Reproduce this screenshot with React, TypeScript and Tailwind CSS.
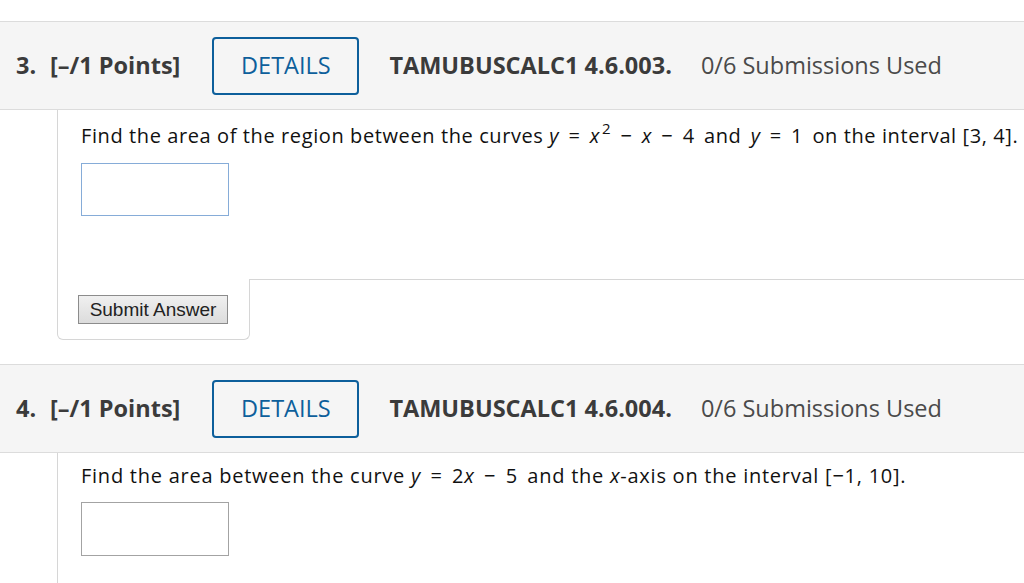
import React from 'react';

const headFont = { fontFamily: '"Open Sans", "Liberation Sans", sans-serif' };

function Header({ num, code }: { num: string; code: string }) {
  return (
    <div
      className="flex items-center h-[89px] border-y border-[#dcdcdc] bg-[#f5f5f5] pl-4 text-[23.5px] text-[#3b3b3b]"
      style={headFont}
    >
      <span className="font-bold w-[34px]">{num}.</span>
      <span className="font-bold">[–/1 Points]</span>
      <button className="ml-[32px] h-[58px] w-[147px] border-2 border-[#0d5f9b] rounded-[4px] text-[#0d5f9b] flex items-center justify-center">
        DETAILS
      </button>
      <span className="font-bold ml-[30px]">TAMUBUSCALC1 {code}.</span>
      <span className="ml-[29px] text-[#4a4a4a]">0/6 Submissions Used</span>
    </div>
  );
}

function I({ children }: { children: React.ReactNode }) {
  return <i>{children}</i>;
}

// math runs get wider spaces, like the Verdana page
function M({ children }: { children: React.ReactNode }) {
  return <span className="[word-spacing:3.5px]">{children}</span>;
}

export default function App() {
  return (
    <div className="w-[1024px] h-[583px] overflow-hidden bg-white pt-[21px]">
      {/* Question 3 */}
      <Header num="3" code="4.6.003" />
      <div className="ml-[57px]">
        <div className="border-l border-[#d6d6d6] h-[169px] pl-[23px] pt-[14px] text-[20px] tracking-[0.6px] text-[#111] font-['Open_Sans',sans-serif]">
          <p className="leading-[24px] whitespace-nowrap">
            Find the area of the region between the curves{' '}
            <M>
              <I>y</I> = <I>x</I>
              <sup className="text-[15px] -top-[9px] ml-[2px]">2</sup> − <I>x</I> − 4 and <I>y</I> = 1 on
            </M>{' '}
            the interval [3, 4].
          </p>
          <input
            className="mt-[15px] block w-[148px] h-[53px] border border-[#86acd8] outline-none"
            type="text"
          />
        </div>
        <div className="flex">
          <div className="w-[193px] h-[61px] border-l border-b border-r border-[#d6d6d6] rounded-b-[6px] pl-[20px] pt-[16px]">
            <button className="w-[150px] h-[29px] border border-[#8c8c8c] bg-gradient-to-b from-[#f0f0f0] to-[#dcdcdc] text-[19px] text-[#222] leading-none font-['Liberation_Sans',Arial,sans-serif]">
              Submit Answer
            </button>
          </div>
          <div className="flex-1 border-t border-[#d6d6d6]" />
        </div>
      </div>

      {/* Question 4 */}
      <div className="mt-[24px]">
        <Header num="4" code="4.6.004" />
        <div className="ml-[57px] border-l border-[#d6d6d6] h-[200px] pl-[23px] pt-[11px] text-[20px] tracking-[0.75px] text-[#111] font-['Open_Sans',sans-serif]">
          <p className="leading-[24px] whitespace-nowrap">
            Find the area between the curve{' '}
            <M>
              <I>y</I> = 2<I>x</I> − 5 and
            </M>{' '}
            the <I>x</I>-axis on the interval [−1, 10].
          </p>
          <input
            className="mt-[14px] block w-[148px] h-[54px] border border-[#a3a3a3] outline-none"
            type="text"
          />
        </div>
      </div>
    </div>
  );
}
